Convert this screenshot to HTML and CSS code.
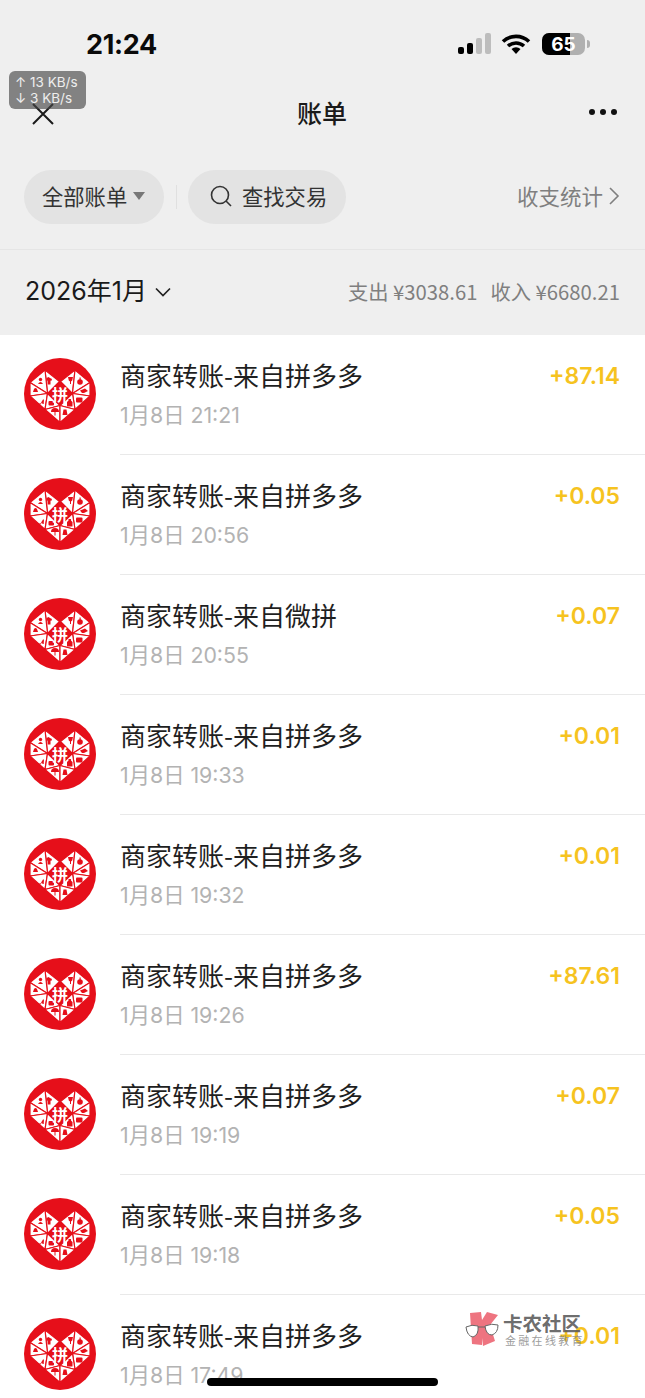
FILE: index.html
```html
<!DOCTYPE html>
<html lang="zh">
<head>
<meta charset="utf-8">
<title>账单</title>
<link rel="stylesheet" href="styles.css">
</head>
<body>
<svg class="defs" width="0" height="0" aria-hidden="true">
  <symbol id="pdd" viewBox="0 0 72 72">
    <circle cx="36" cy="36" r="36" fill="#e60f1a"/>
    <g fill="#fff" stroke="#e60f1a" stroke-width="1.200" stroke-linejoin="round">
      <path d="M21 12 L35.500 23.500 L23.500 35.500 Z"/>
      <path d="M21 12 L6 24.500 L23.500 35.500 Z"/>
      <path d="M6 24.500 L6 38 L23.500 35.500 Z"/>
      <path d="M6 38 L21 51.500 L23.500 35.500 Z"/>
      <path d="M21 51.500 L36 47.500 L23.500 35.500 Z"/>
      <path d="M21 51.500 L36 64.500 L36 47.500 Z"/>
      <path d="M51 12 L36.500 23.500 L48.500 35.500 Z"/>
      <path d="M51 12 L66 24.500 L48.500 35.500 Z"/>
      <path d="M66 24.500 L66 38 L48.500 35.500 Z"/>
      <path d="M66 38 L51 51.500 L48.500 35.500 Z"/>
      <path d="M51 51.500 L36 47.500 L48.500 35.500 Z"/>
      <path d="M51 51.500 L36 64.500 L36 47.500 Z"/>
    </g>
    <g fill="#e60f1a">
      <circle cx="16.500" cy="21.500" r="1.700"/><path d="M14 26 Q16.500 22 19 26 Z"/>
      <path d="M22.500 20 L24.500 19 L26 20 L28 21 L27.300 23 L26.500 22.500 L26.500 26.500 L23.500 26.500 L23.500 22.500 L22.500 23 Z"/>
      <path d="M10 31 Q11.500 29 13 31 L14 34 L9 34 Z"/>
      <path d="M14.500 45.500 L16.500 45.500 L19 41.500 L20 41.500 L19.700 46 L18.500 46 L18 44.500 L16.500 46.500 Z"/>
      <rect x="24.500" y="43" width="5.500" height="4.500" rx="1"/>
      <path d="M27 54 A4 4 0 0 1 35 54 Z"/><rect x="30.500" y="53.500" width="1" height="4"/>
      <path d="M44 19 L49 19 L48.200 22.500 L47 23.500 L47 26 L46 26 L46 23.500 L44.800 22.500 Z"/>
      <circle cx="56" cy="24" r="2.800"/><rect x="55.500" y="19.500" width="1.200" height="2.500"/>
      <path d="M56 32.500 L61 30.500 L64 33 L60 35 L58 35 Z"/>
      <path d="M44.500 41 L47 41 L47 42.500 L48.500 44 L48.500 48.500 L43 48.500 L43 44 L44.500 42.500 Z"/>
      <rect x="52" y="39.500" width="6.500" height="5" rx="1"/>
      <path d="M39.500 51.500 L42.500 51.500 L43.500 57 L38.500 57 Z"/>
    </g>
    <path d="M36 24.500 L48 36 L36 46.500 L24 36 Z" fill="#e60f1a"/>
  </symbol>
</svg>
<div class="page">
  <header class="top">
    <div class="status">
      <span class="time">21:24</span>
      <div class="status-icons">
        <svg class="signal" width="34" height="22" viewBox="0 0 34 22">
          <rect x="0" y="14" width="6" height="7" rx="2" fill="#000"/>
          <rect x="9" y="10" width="6" height="11" rx="2" fill="#000"/>
          <rect x="18" y="5" width="6" height="16" rx="2" fill="#bdbdbd"/>
          <rect x="27" y="0" width="6" height="21" rx="2" fill="#bdbdbd"/>
        </svg>
        <svg class="wifi" width="30" height="22" viewBox="0 0 30 22">
          <path d="M15 21 L10.500 16 A7 7 0 0 1 19.500 16 Z" fill="#000"/>
          <path d="M2 8.500 A19 19 0 0 1 28 8.500" fill="none" stroke="#000" stroke-width="3.600"/>
          <path d="M7 13 A12 12 0 0 1 23 13" fill="none" stroke="#000" stroke-width="3.600"/>
        </svg>
        <div class="battery"><span class="battery-fill"></span><span class="battery-num">65</span></div>
        <span class="battery-cap"></span>
      </div>
    </div>
    <nav class="nav">
      <svg class="close" width="22" height="22" viewBox="0 0 22 22"><path d="M1 1 L21 21 M21 1 L1 21" stroke="#1a1a1a" stroke-width="2" fill="none"/></svg>
      <h1 class="nav-title">账单</h1>
      <div class="more"><i></i><i></i><i></i></div>
    </nav>
    <div class="filters">
      <div class="pill pill-all">全部账单<span class="caret"></span></div>
      <span class="divider"></span>
      <div class="pill pill-search">
        <svg width="24" height="24" viewBox="0 0 24 24"><circle cx="11" cy="11" r="8.500" fill="none" stroke="#333" stroke-width="1.600"/><path d="M17 17 L22 22" stroke="#333" stroke-width="1.600"/></svg>
        查找交易
      </div>
      <div class="stats">收支统计<svg width="12" height="20" viewBox="0 0 12 20"><path d="M2 2 L10 10 L2 18" fill="none" stroke="#7f7f7f" stroke-width="1.600"/></svg></div>
    </div>
  </header>
  <section class="month">
    <div class="month-label">2026年1月<svg width="16" height="10" viewBox="0 0 16 10"><path d="M1 1.500 L8 8.500 L15 1.500" fill="none" stroke="#222" stroke-width="1.700"/></svg></div>
    <div class="totals"><span>支出 ¥3038.61</span><span>收入 ¥6680.21</span></div>
  </section>
  <ul class="list">
    <li class="row"><div class="logo"><svg class="logo-art"><use href="#pdd"/></svg></div><div class="row-body"><div class="row-main"><span class="row-title">商家转账-来自拼多多</span><span class="row-date">1月8日 21:21</span></div><span class="row-amount">+87.14</span></div></li>
    <li class="row"><div class="logo"><svg class="logo-art"><use href="#pdd"/></svg></div><div class="row-body"><div class="row-main"><span class="row-title">商家转账-来自拼多多</span><span class="row-date">1月8日 20:56</span></div><span class="row-amount">+0.05</span></div></li>
    <li class="row"><div class="logo"><svg class="logo-art"><use href="#pdd"/></svg></div><div class="row-body"><div class="row-main"><span class="row-title">商家转账-来自微拼</span><span class="row-date">1月8日 20:55</span></div><span class="row-amount">+0.07</span></div></li>
    <li class="row"><div class="logo"><svg class="logo-art"><use href="#pdd"/></svg></div><div class="row-body"><div class="row-main"><span class="row-title">商家转账-来自拼多多</span><span class="row-date">1月8日 19:33</span></div><span class="row-amount">+0.01</span></div></li>
    <li class="row"><div class="logo"><svg class="logo-art"><use href="#pdd"/></svg></div><div class="row-body"><div class="row-main"><span class="row-title">商家转账-来自拼多多</span><span class="row-date">1月8日 19:32</span></div><span class="row-amount">+0.01</span></div></li>
    <li class="row"><div class="logo"><svg class="logo-art"><use href="#pdd"/></svg></div><div class="row-body"><div class="row-main"><span class="row-title">商家转账-来自拼多多</span><span class="row-date">1月8日 19:26</span></div><span class="row-amount">+87.61</span></div></li>
    <li class="row"><div class="logo"><svg class="logo-art"><use href="#pdd"/></svg></div><div class="row-body"><div class="row-main"><span class="row-title">商家转账-来自拼多多</span><span class="row-date">1月8日 19:19</span></div><span class="row-amount">+0.07</span></div></li>
    <li class="row"><div class="logo"><svg class="logo-art"><use href="#pdd"/></svg></div><div class="row-body"><div class="row-main"><span class="row-title">商家转账-来自拼多多</span><span class="row-date">1月8日 19:18</span></div><span class="row-amount">+0.05</span></div></li>
    <li class="row"><div class="logo"><svg class="logo-art"><use href="#pdd"/></svg></div><div class="row-body"><div class="row-main"><span class="row-title">商家转账-来自拼多多</span><span class="row-date">1月8日 17:49</span></div><span class="row-amount">+0.01</span></div></li>
  </ul>
  <div class="speed"><span>↑ 13 KB/s</span><span>↓ 3 KB/s</span></div>
  <div class="watermark">
    <svg width="34" height="34" viewBox="0 0 34 34">
      <path d="M5 1 L16 0 L17 8 L22 0 L33 3 L25 13 L30 29 L18 34 L17 26 L17 33 L7 32 Z" fill="#ee7480"/>
      <path d="M1 15 Q7 12 13 14 Q14 23 8 25 Q2 24 1 15 Z" fill="#fff" stroke="#666" stroke-width="1"/>
      <path d="M20 14 Q27 11 33 13 Q33 21 27 23 Q21 23 20 14 Z" fill="#fff" stroke="#666" stroke-width="1"/>
      <path d="M13 15 L20 15" stroke="#666" stroke-width="1" fill="none"/>
    </svg>
    <div class="wm-text"><span class="wm-name">卡农社区</span><span class="wm-sub">金融在线教育</span></div>
  </div>
  <div class="home-bar"></div>
</div>
</body>
</html>
```
FILE: styles.css
```css
* { box-sizing: border-box; }
html, body { margin: 0; padding: 0; }
body { font-family: "Noto Sans CJK SC", "Inter", sans-serif; background: #fff; color: #1a1a1a; }
.defs { position: absolute; }
.page { position: relative; width: 645px; height: 1398px; overflow: hidden; }
.top { background: #efefef; height: 250px; border-bottom: 1px solid #e5e5e5; }
.status { display: flex; justify-content: space-between; align-items: center; height: 88px; padding: 0 55px 0 86px; }
.time { font: 700 27px/1 "Inter", sans-serif; color: #0a0a0a; letter-spacing: -0.3px; }
.status-icons { display: flex; align-items: center; }
.signal { margin-right: 9px; }
.wifi { margin-right: 11px; }
.battery { position: relative; width: 43px; height: 22px; border-radius: 7px; background: #b0b0b0; overflow: hidden; display: flex; align-items: center; justify-content: center; }
.battery-fill { position: absolute; left: 0; top: 0; bottom: 0; width: 28px; background: #000; }
.battery-num { position: relative; font: 700 19px/1 "Inter", sans-serif; color: #fff; }
.battery-cap { width: 3px; height: 8px; margin-left: 2px; background: #b0b0b0; border-radius: 0 3px 3px 0; }
.nav { display: flex; align-items: center; justify-content: space-between; height: 50px; padding: 0 28px 2px 32px; }
.nav-title { margin: 0 0 0 1px; font-size: 25px; font-weight: 500; line-height: 1; color: #1a1a1a; }
.close { margin-top: 3px; }
.more { display: flex; gap: 5px; }
.more i { width: 6px; height: 6px; border-radius: 50%; background: #111; }
.filters { display: flex; align-items: center; height: 54px; margin-top: 32px; padding: 0 25px 0 24px; }
.pill { display: flex; align-items: center; height: 54px; border-radius: 27px; background: #e3e3e3; font-size: 21.300px; line-height: 1; padding-bottom: 2px; color: #333; }
.pill-all { width: 140px; padding-left: 18px; }
.caret { margin-left: 6px; border-left: 6.500px solid transparent; border-right: 6.500px solid transparent; border-top: 8px solid #777; }
.divider { width: 1px; height: 24px; margin: 0 11px 0 12px; background: #e0e0e0; }
.pill-search { width: 158px; padding-left: 21px; gap: 9px; }
.stats { display: flex; align-items: center; gap: 5px; margin-left: auto; padding-bottom: 2px; font-size: 21.500px; line-height: 1; color: #7f7f7f; }
.month { display: flex; align-items: center; justify-content: space-between; height: 85px; padding: 0 25px 2px; background: #efefef; }
.month-label { display: flex; align-items: center; gap: 8px; font: 400 25px/1 "Inter", "Noto Sans CJK SC", sans-serif; color: #1a1a1a; }
.totals { display: flex; gap: 13px; font: 400 20.300px/1 "Noto Sans CJK SC", sans-serif; color: #7f7f7f; }
.list { margin: 0; padding: 0; list-style: none; background: #fff; }
.row { display: flex; height: 120px; padding-left: 24px; }
.logo { position: relative; flex: none; width: 72px; height: 72px; margin-top: 23px; margin-right: 24px; }
.logo-art { display: block; width: 72px; height: 72px; }
.logo::after { content: "拼"; position: absolute; inset: 0; display: flex; align-items: center; justify-content: center; font-size: 16px; font-weight: 700; line-height: 1; color: #fff; }
.row-body { flex: 1; display: flex; justify-content: space-between; border-bottom: 1px solid #e9e9e9; padding: 21px 25px 0 0; }
.row-main { display: flex; flex-direction: column; gap: 7px; }
.row-title { font-size: 26px; line-height: 38px; color: #1f1f1f; }
.row-date { font: 400 21.300px/28px "Inter", "Noto Sans CJK SC", sans-serif; color: #b3b3b3; }
.row-amount { margin-top: 1px; font: 600 23px/38px "Inter", sans-serif; color: #f6c31f; }
.speed { position: absolute; left: 9px; top: 71px; width: 77px; height: 38px; padding: 3px 6px; display: flex; flex-direction: column; border-radius: 6px; background: rgba(70,70,70,.65); color: #eee; font: 400 13.500px/16px "Inter", sans-serif; }
.watermark { position: absolute; left: 465px; top: 1312px; display: flex; gap: 4px; }
.wm-text { display: flex; flex-direction: column; }
.wm-name { font-size: 19.500px; font-weight: 700; line-height: 22px; color: rgba(90,90,90,.9); }
.wm-sub { font-size: 11px; line-height: 13px; margin: 0 0 0 2px; letter-spacing: 2.300px; color: rgba(130,130,130,.8); }
.home-bar { position: absolute; left: 207px; top: 1378px; width: 231px; height: 8px; border-radius: 4px; background: #000; }
```
